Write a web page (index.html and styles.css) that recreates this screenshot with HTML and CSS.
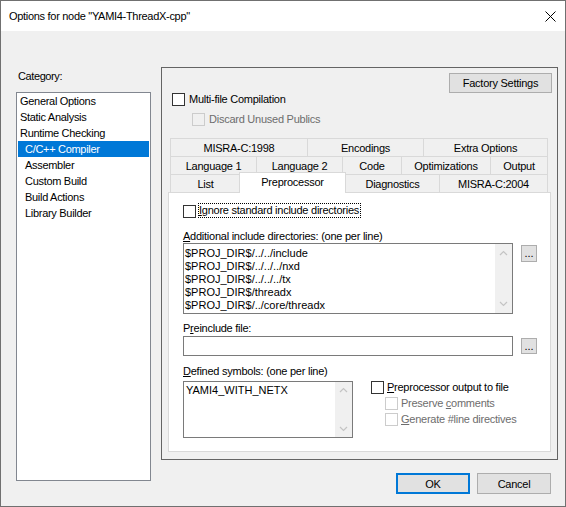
FILE: index.html
```html
<!DOCTYPE html>
<html>
<head>
<meta charset="utf-8">
<title>Options for node</title>
<link rel="stylesheet" href="styles.css">
</head>
<body>
<div class="window">
  <div class="titlebar">
    <span class="title">Options for node "YAMI4-ThreadX-cpp"</span>
    <svg class="close" width="11" height="11" viewBox="0 0 11 11"><path d="M0.5 0.5 L10.5 10.5 M10.5 0.5 L0.5 10.5" stroke="#000" stroke-width="1" fill="none"/></svg>
  </div>
  <div class="client">
    <div class="leftcol">
      <div class="cat-label">Category:</div>
      <ul class="list">
        <li>General Options</li>
        <li>Static Analysis</li>
        <li>Runtime Checking</li>
        <li class="sub sel">C/C++ Compiler</li>
        <li class="sub">Assembler</li>
        <li class="sub">Custom Build</li>
        <li class="sub">Build Actions</li>
        <li class="sub">Library Builder</li>
      </ul>
    </div>
    <div class="group">
      <div class="factory-row"><div class="btn factory">Factory Settings</div></div>
      <div class="check multi"><span class="box"></span><span>Multi-file Compilation</span></div>
      <div class="check discard disabled"><span class="box"></span><span>Discard Unused Publics</span></div>
      <div class="tabs">
        <div class="tabrow row1">
          <div class="tab">MISRA-C:1998</div>
          <div class="tab">Encodings</div>
          <div class="tab">Extra Options</div>
        </div>
        <div class="tabrow row2">
          <div class="tab">Language 1</div>
          <div class="tab">Language 2</div>
          <div class="tab">Code</div>
          <div class="tab">Optimizations</div>
          <div class="tab">Output</div>
        </div>
        <div class="tabrow row3">
          <div class="tab">List</div>
          <div class="tab sel">Preprocessor</div>
          <div class="tab">Diagnostics</div>
          <div class="tab">MISRA-C:2004</div>
        </div>
        <div class="page">
          <div class="check ignore"><span class="box"></span><span class="focus"><u>I</u>gnore standard include directories</span></div>
          <div class="plabel addl"><u>A</u>dditional include directories: (one per line)</div>
          <div class="field-row">
            <div class="textbox incbox">
              <div class="lines">$PROJ_DIR$/../../include<br>$PROJ_DIR$/../../../nxd<br>$PROJ_DIR$/../../../tx<br>$PROJ_DIR$/threadx<br>$PROJ_DIR$/../core/threadx</div>
              <div class="vscroll">
                <svg width="17" height="17" viewBox="0 0 17 17"><polyline points="5,11 8.5,7.5 12,11" stroke="#c4c4c4" stroke-width="1.2" fill="none"/></svg>
                <svg width="17" height="17" viewBox="0 0 17 17"><polyline points="5,6 8.5,9.5 12,6" stroke="#c4c4c4" stroke-width="1.2" fill="none"/></svg>
              </div>
            </div>
            <div class="btn browse">...</div>
          </div>
          <div class="plabel pre">P<u>r</u>einclude file:</div>
          <div class="field-row single-row">
            <div class="textbox single"></div>
            <div class="btn browse b2">...</div>
          </div>
          <div class="plabel def"><u>D</u>efined symbols: (one per line)</div>
          <div class="def-row">
            <div class="textbox defbox">
              <div class="lines deflines">YAMI4_WITH_NETX</div>
              <div class="vscroll">
                <svg width="17" height="17" viewBox="0 0 17 17"><polyline points="5,10 8.5,6.5 12,10" stroke="#c4c4c4" stroke-width="1.2" fill="none"/></svg>
                <svg width="17" height="17" viewBox="0 0 17 17"><polyline points="5,7 8.5,10.5 12,7" stroke="#c4c4c4" stroke-width="1.2" fill="none"/></svg>
              </div>
            </div>
            <div class="ppopts">
              <div class="check ppout"><span class="box"></span><span><u>P</u>reprocessor output to file</span></div>
              <div class="check subopt disabled"><span class="box"></span><span>Preserve <u>c</u>omments</span></div>
              <div class="check subopt disabled"><span class="box"></span><span><u>G</u>enerate #line directives</span></div>
            </div>
          </div>
        </div>
      </div>
    </div>
    <div class="buttons">
      <div class="btn ok">OK</div>
      <div class="btn cancel">Cancel</div>
    </div>
  </div>
</div>
</body>
</html>
```

FILE: styles.css
```css
* {
  box-sizing: border-box;
  margin: 0;
  padding: 0;
}

html, body {
  width: 566px;
  height: 507px;
  overflow: hidden;
}

body {
  font-family: "Liberation Sans", Arial, sans-serif;
  font-size: 11px;
  letter-spacing: -0.25px;
  color: #000;
  background: #f0f0f0;
}

.window {
  width: 566px;
  height: 507px;
  border: 1px solid #707070;
  background: #f0f0f0;
  display: flex;
  flex-direction: column;
}

.titlebar {
  flex: none;
  height: 30px;
  background: #fff;
  display: flex;
  align-items: center;
  justify-content: space-between;
  padding: 0 9px 0 8px;
}

.title {
  font-size: 11px;
  letter-spacing: -0.3px;
  line-height: 16px;
  white-space: nowrap;
}

.close {
  display: block;
  margin-top: 1px;
}

.client {
  display: grid;
  grid-template-columns: 135px 397px;
  grid-template-rows: auto auto;
  column-gap: 10px;
  padding-left: 15px;
}

.leftcol {
  grid-row: 1 / span 2;
  padding-top: 39px;
}

.cat-label {
  height: 13px;
  line-height: 13px;
  padding-left: 2px;
  letter-spacing: -0.4px;
}

.list {
  margin-top: 9px;
  height: 389px;
  border: 1px solid #828790;
  background: #fff;
  list-style: none;
}

.list li {
  height: 16px;
  line-height: 16px;
  margin: 0 1px;
  padding-left: 2px;
  letter-spacing: -0.3px;
  white-space: nowrap;
}

.list li.sub {
  padding-left: 7px;
}

.list li.sel {
  background: #0078d7;
  color: #fff;
}

.group {
  margin-top: 36px;
  height: 393px;
  border: 1px solid #646464;
  display: flex;
  flex-direction: column;
}

.btn {
  background: #e1e1e1;
  border: 1px solid #adadad;
  display: flex;
  align-items: center;
  justify-content: center;
  white-space: nowrap;
}

.factory-row {
  display: flex;
  justify-content: flex-end;
  padding: 5px 5px 0 0;
}

.factory {
  width: 103px;
  height: 20px;
}

.check {
  display: flex;
  align-items: center;
  height: 13px;
  line-height: 13px;
  white-space: nowrap;
}

.box {
  flex: none;
  width: 13px;
  height: 13px;
  border: 1px solid #333;
  background: #fff;
  margin-right: 4px;
}

.disabled {
  color: #6d6d6d;
}

.disabled .box {
  border-color: #cccccc;
  background: transparent;
}

.multi {
  margin-left: 10px;
}

.discard {
  margin-left: 30px;
  margin-top: 7px;
}

.tabs {
  margin: 12px 0 0 6px;
  width: 383px;
}

.tabrow {
  display: grid;
  height: 18px;
  margin: 0 3px 0 2px;
}

.row1 {
  grid-template-columns: 137px 116px 125px;
}

.row2 {
  grid-template-columns: 86px 86px 59px 89px 58px;
}

.row3 {
  grid-template-columns: 70px 105px 94px 109px;
}

.tab {
  display: flex;
  align-items: center;
  justify-content: center;
  background: #f0f0f0;
  border-top: 1px solid #d9d9d9;
  border-left: 1px solid #d9d9d9;
  white-space: nowrap;
}

.tab:last-child {
  border-right: 1px solid #d9d9d9;
}

.tab.sel {
  position: relative;
  z-index: 1;
  margin: -2px -1px -1px -1px;
  padding-bottom: 3px;
  background: #fff;
  border-right: 1px solid #d9d9d9;
}

.page {
  height: 260px;
  border: 1px solid #d9d9d9;
  background: #fff;
  padding: 10px 0 0 14px;
}

.ignore {
  height: 15px;
  align-items: flex-end;
}

.ignore .box {
  margin-right: 2px;
}

.focus {
  height: 15px;
  line-height: 13px;
  border: 1px dotted #000;
  padding-right: 1px;
}

.plabel {
  height: 13px;
  line-height: 13px;
  white-space: nowrap;
}

.addl {
  margin-top: 12px;
}

.pre {
  margin-top: 8px;
}

.def {
  margin-top: 9px;
}

.field-row {
  display: grid;
  grid-template-columns: 330px 16px;
  column-gap: 8px;
  align-items: start;
}

.single-row {
  margin-top: 1px;
}

.textbox {
  border: 1px solid #7a7a7a;
  background: #fff;
  display: flex;
}

.incbox {
  height: 71px;
}

.single {
  height: 20px;
}

.lines {
  flex: 1;
  padding: 3px 0 0 1px;
  line-height: 13px;
  letter-spacing: 0;
  white-space: nowrap;
  overflow: hidden;
}

.vscroll {
  flex: none;
  width: 17px;
  background: #f0f0f0;
  display: flex;
  flex-direction: column;
  justify-content: space-between;
}

.vscroll svg {
  display: block;
}

.browse {
  margin-top: 2px;
  height: 17px;
  line-height: 10px;
  align-items: flex-start;
  padding-top: 2px;
  letter-spacing: 0;
}

.b2 {
  height: 16px;
}

.def-row {
  display: flex;
  align-items: flex-start;
  margin-top: 3px;
}

.defbox {
  width: 170px;
  height: 57px;
}

.deflines {
  padding-top: 2px;
  padding-left: 2px;
}

.ppopts {
  margin-left: 18px;
  margin-top: -1px;
}

.ppout {
  height: 15px;
}

.ppout .box {
  margin-right: 3px;
}

.subopt {
  height: 16px;
  margin-left: 14px;
}

.subopt .box {
  margin-right: 3px;
}

.buttons {
  grid-column: 2;
  display: flex;
  justify-content: flex-end;
  gap: 7px;
  padding-right: 7px;
  margin-top: 13px;
}

.ok,
.cancel {
  width: 74px;
  height: 21px;
}

.ok {
  border: 2px solid #0078d7;
}
```
